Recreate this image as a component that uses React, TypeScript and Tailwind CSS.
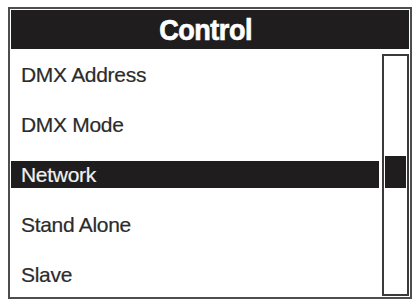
import React from 'react';

const items = ['DMX Address', 'DMX Mode', 'Network', 'Stand Alone', 'Slave'];
const selected = 2;

export default function App() {
  return (
    <div className="w-[415px] h-[301px] bg-white pl-[8px] pt-[7px]" style={{ fontFamily: '"Liberation Sans", Arial, sans-serif' }}>
      <div className="w-[404px] h-[292px] border-2 border-[#4d4d4d] p-[1px] flex flex-col overflow-hidden">
        {/* Title bar */}
        <div className="h-[39px] bg-[#1f1d1e] flex items-center justify-center pr-[9px] shrink-0">
          <span className="text-white font-bold text-[30px] leading-none tracking-[-0.5px] scale-x-[0.9] [-webkit-text-stroke:0.7px_white]">Control</span>
        </div>

        <div className="flex flex-1 min-h-0">
          {/* Menu list */}
          <div className="flex-1 flex flex-col pr-[3px]">
            {items.map((item, i) => (
              <div key={item} className="h-[50px] shrink-0 flex items-center pt-[1px]">
                {i === selected ? (
                  <div className="w-full h-[27px] bg-[#1f1d1e] flex items-center pl-[10px]">
                    <span className="text-[21px] text-[#f2f2f2] leading-none tracking-[-0.3px] [-webkit-text-stroke:0.2px_#f2f2f2]">{item}</span>
                  </div>
                ) : (
                  <span className="pl-[10px] text-[21px] text-[#2b2b2b] leading-none tracking-[-0.3px] [-webkit-text-stroke:0.2px_#2b2b2b]">{item}</span>
                )}
              </div>
            ))}
          </div>

          {/* Scrollbar */}
          <div className="w-[27px] mt-[5px] border-2 border-[#3a3a3a] p-[1px] flex flex-col">
            <div className="h-[99px]" />
            <div className="h-[32px] bg-[#1f1d1e]" />
          </div>
        </div>
      </div>
    </div>
  );
}
